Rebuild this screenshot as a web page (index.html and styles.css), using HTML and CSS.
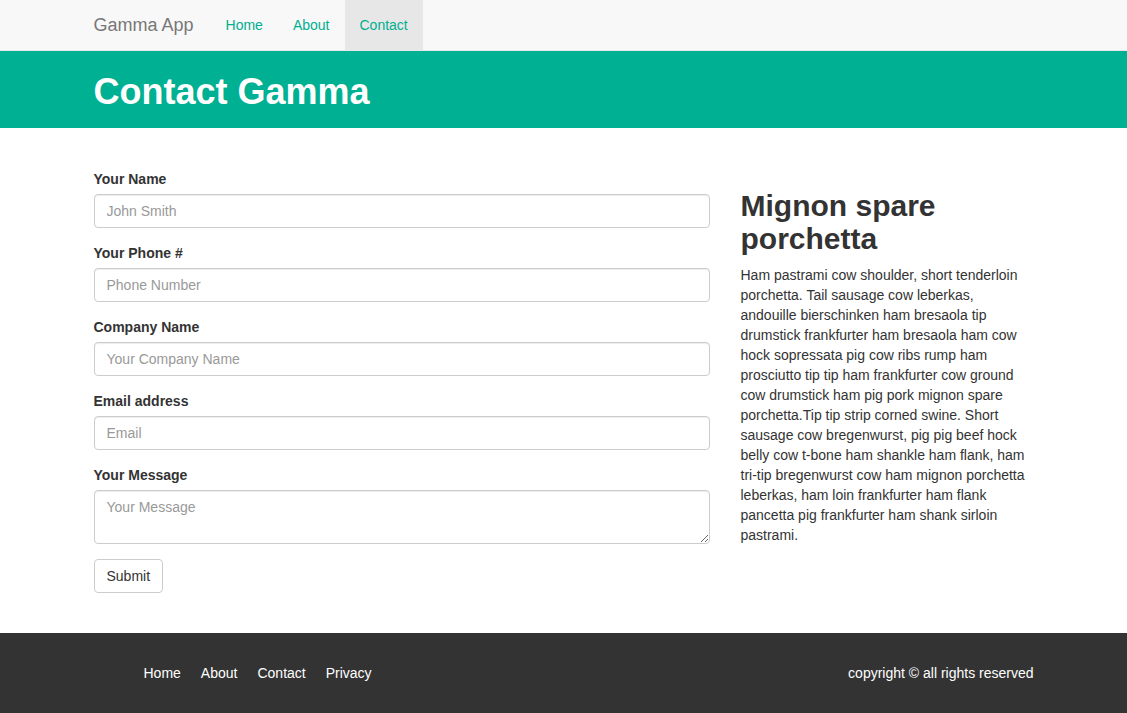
FILE: index.html
```html
<!DOCTYPE html>
<html lang="en">
<head>
<meta charset="utf-8">
<title>Contact Gamma</title>
<link rel="stylesheet" href="styles.css">
</head>
<body>
<nav class="navbar">
  <div class="container navbar-inner">
    <a class="brand" href="#">Gamma App</a>
    <ul class="nav">
      <li><a href="#">Home</a></li>
      <li><a href="#">About</a></li>
      <li class="active"><a href="#">Contact</a></li>
    </ul>
  </div>
</nav>

<header class="band">
  <div class="container">
    <h1>Contact Gamma</h1>
  </div>
</header>

<main class="container main">
  <form class="form-col">
    <div class="form-group">
      <label for="name">Your Name</label>
      <input id="name" class="form-control" type="text" placeholder="John Smith">
    </div>
    <div class="form-group">
      <label for="phone">Your Phone #</label>
      <input id="phone" class="form-control" type="text" placeholder="Phone Number">
    </div>
    <div class="form-group">
      <label for="company">Company Name</label>
      <input id="company" class="form-control" type="text" placeholder="Your Company Name">
    </div>
    <div class="form-group">
      <label for="email">Email address</label>
      <input id="email" class="form-control" type="email" placeholder="Email">
    </div>
    <div class="form-group">
      <label for="msg">Your Message</label>
      <textarea id="msg" class="form-control" rows="2" placeholder="Your Message"></textarea>
    </div>
    <button type="submit" class="btn">Submit</button>
  </form>
  <aside class="side-col">
    <h2>Mignon spare porchetta</h2>
    <p>Ham pastrami cow shoulder, short tenderloin porchetta. Tail sausage cow leberkas, andouille bierschinken ham bresaola tip drumstick frankfurter ham bresaola ham cow hock sopressata pig cow ribs rump ham prosciutto tip tip ham frankfurter cow ground cow drumstick ham pig pork mignon spare porchetta.Tip tip strip corned swine. Short sausage cow bregenwurst, pig pig beef hock belly cow t-bone ham shankle ham flank, ham tri-tip bregenwurst cow ham mignon porchetta leberkas, ham loin frankfurter ham flank pancetta pig frankfurter ham shank sirloin pastrami.</p>
  </aside>
</main>

<footer class="footer">
  <div class="container footer-inner">
    <ul class="footer-links">
      <li><a href="#">Home</a></li>
      <li><a href="#">About</a></li>
      <li><a href="#">Contact</a></li>
      <li><a href="#">Privacy</a></li>
    </ul>
    <p class="copyright">copyright © all rights reserved</p>
  </div>
</footer>
</body>
</html>
```

FILE: styles.css
```css
* {
  box-sizing: border-box;
}

html, body {
  margin: 0;
  padding: 0;
}

body {
  font-family: "Liberation Sans", Helvetica, Arial, sans-serif;
  font-size: 14px;
  line-height: 20px;
  color: #333;
  background: #fff;
}

a {
  text-decoration: none;
}

.container {
  width: 970px;
  margin: 0 auto;
  padding: 0 15px;
}

/* navbar */
.navbar {
  background: #f8f8f8;
  border-bottom: 1px solid #e7e7e7;
  height: 51px;
}

.navbar-inner {
  display: flex;
  align-items: stretch;
  height: 50px;
}

.brand {
  font-size: 18px;
  line-height: 20px;
  color: #777;
  padding: 15px 17px 15px 0;
}

.nav {
  list-style: none;
  margin: 0;
  padding: 0;
  display: flex;
}

.nav a {
  display: block;
  padding: 15px;
  line-height: 20px;
  color: #00ae90;
}

.nav .active a {
  background: #e7e7e7;
}

/* teal band */
.band {
  background: #00b092;
  padding: 21px 0 16px;
}

.band h1 {
  margin: 0;
  font-size: 36px;
  line-height: 40px;
  font-weight: 700;
  color: #fff;
}

/* main */
.main {
  display: flex;
  padding-top: 41px;
  padding-bottom: 40px;
  gap: 31px;
}

.form-col {
  width: 616px;
  flex: none;
}

.side-col {
  width: 293px;
  flex: none;
}

.form-group {
  margin-bottom: 15px;
}

label {
  display: block;
  font-weight: 700;
  margin-bottom: 5px;
}

.form-control {
  display: block;
  width: 100%;
  height: 34px;
  padding: 6px 12px;
  font-family: inherit;
  font-size: 14px;
  line-height: 20px;
  color: #555;
  background: #fff;
  border: 1px solid #ccc;
  border-radius: 4px;
  box-shadow: inset 0 1px 1px rgba(0, 0, 0, .075);
}

.form-control::placeholder {
  color: #999;
}

textarea.form-control {
  height: 54px;
  resize: vertical;
}

.btn {
  display: inline-block;
  height: 34px;
  padding: 6px 12px;
  font-family: inherit;
  font-size: 14px;
  line-height: 20px;
  color: #333;
  background: #fff;
  border: 1px solid #ccc;
  border-radius: 4px;
}

.side-col h2 {
  margin: 20px 0 10px;
  font-size: 30px;
  line-height: 33px;
  font-weight: 700;
}

.side-col p {
  margin: 0;
}

/* footer */
.footer {
  background: #333;
  color: #fff;
  padding: 30px 0;
}

.footer-inner {
  display: flex;
  justify-content: space-between;
}

.footer-links {
  list-style: none;
  margin: 0;
  padding: 0 0 0 40px;
  display: flex;
}

.footer-links a {
  display: block;
  padding: 0 10px;
  color: #fff;
}

.copyright {
  margin: 0;
}
```
